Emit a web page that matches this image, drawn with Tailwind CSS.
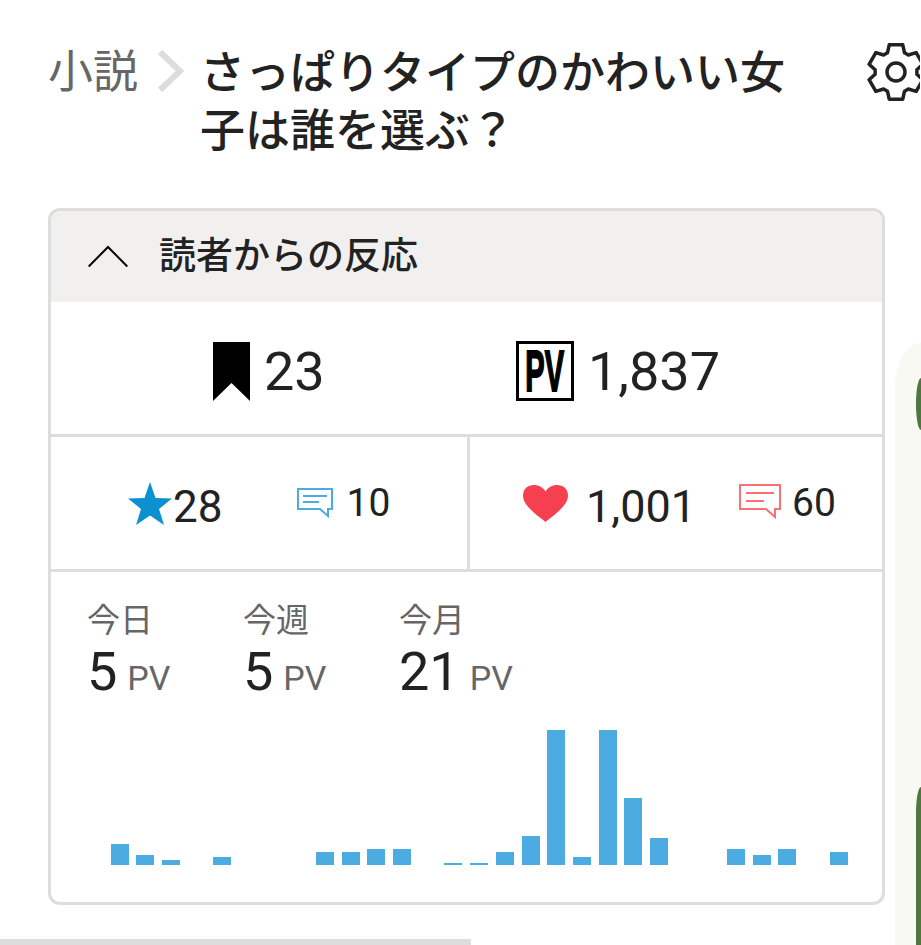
<!DOCTYPE html>
<html lang="ja">
<head>
    <meta charset="UTF-8">
    <title>読者からの反応</title>
    <script src="https://cdn.jsdelivr.net/npm/@tailwindcss/browser@4"></script>
</head>
<body class="bg-white h-[945px] w-[921px] overflow-hidden relative text-[#222222] font-['Roboto','Noto_Sans_CJK_JP',sans-serif]">

    <!-- side panel peeking in from the right -->
    <div class="absolute left-[895px] top-[343px] w-[26px] h-[602px] bg-[#f8f9f3] rounded-tl-[26px_44px]"></div>
    <div class="absolute left-[916px] top-[378px] w-[5px] h-[52px] bg-[#4f7541] rounded-l-[5px_26px]"></div>
    <div class="absolute left-[916px] top-[787px] w-[5px] h-[158px] bg-[#4f7541] rounded-tl-[5px_26px]"></div>

    <div class="pl-[48px] pt-[44px] w-[885px]">
        <!-- breadcrumb -->
        <div class="flex items-start h-[164px]">
            <span class="text-[45px] leading-[56px] mt-[1px] text-[#666666] shrink-0">小説</span>
            <svg class="shrink-0 ml-[19px] mt-[5px]" width="28" height="44" viewBox="0 0 28 44" fill="none"><path d="M3 3 L23 22 L3 41" stroke="#dddddd" stroke-width="6"/></svg>
            <h1 class="ml-[15px] mt-[1px] text-[45px] leading-[58px] font-medium w-[590px] shrink-0">さっぱりタイプのかわいい女子は誰を選ぶ？</h1>
            <svg class="shrink-0 ml-[76px] -mt-[2px]" width="54" height="60" viewBox="-30 -30 54 60" fill="none" stroke="#222222" stroke-width="3.5" stroke-linejoin="round">
                <path d="M-8.54 -19.18 L-6.77 -27.17 H6.77 L8.54 -19.18 L12.34 -16.99 L20.14 -19.45 L26.92 -7.72 L20.88 -2.2 V2.2 L26.92 7.72 L20.14 19.45 L12.34 16.99 L8.54 19.18 L6.77 27.17 H-6.77 L-8.54 19.18 L-12.34 16.99 L-20.14 19.45 L-26.92 7.72 L-20.88 2.2 V-2.2 L-26.92 -7.72 L-20.14 -19.45 L-12.34 -16.99 Z"/>
                <circle cx="0" cy="0" r="9"/>
            </svg>
        </div>

        <!-- card -->
        <div class="border-[3px] border-[#dddddd] rounded-[12px] overflow-hidden">
            <div class="flex items-center h-[91px] bg-[#f1f0ee] pl-[37px]">
                <svg width="40" height="23" viewBox="0 0 40 23" fill="none"><path d="M0.7 21.5 L20 2 L39.3 21.5" stroke="#000000" stroke-width="2"/></svg>
                <span class="ml-[31px] text-[37px] font-medium">読者からの反応</span>
            </div>

            <div class="flex h-[135px] pt-[6px] border-b-[3px] border-[#dddddd]">
                <div class="w-[419px] shrink-0 flex items-center pl-[162px]">
                    <svg width="37" height="59" viewBox="0 0 37 59"><path d="M0 0 H37 V59 L18.5 41 L0 59 Z" fill="#000000"/></svg>
                    <span class="ml-[14px] text-[54px]">23</span>
                </div>
                <div class="flex-1 flex items-center pl-[46px]">
                    <div class="w-[58px] h-[60px] shrink-0 border-[3px] border-black flex items-center justify-center">
                        <span class="scale-x-[.5] text-[58px] leading-none font-bold text-black whitespace-nowrap font-['Liberation_Sans',sans-serif] [-webkit-text-stroke:2px_black]">PV</span>
                    </div>
                    <span class="ml-[14px] text-[54px]">1,837</span>
                </div>
            </div>

            <div class="flex h-[135px] border-b-[3px] border-[#dddddd]">
                <div class="w-[419px] shrink-0 border-r-[3px] border-[#dddddd] flex items-center pl-[77px]">
                    <svg width="44" height="43" viewBox="0 0 44 43"><path d="M22 0 L27.5 16 L44 16.5 L31 27 L36 43 L22 33.5 L8 43 L13 27 L0 16.5 L16.5 16 Z" fill="#0c91d0"/></svg>
                    <span class="ml-[1px] mt-[8px] text-[44px]">28</span>
                    <svg class="ml-[75px]" width="36" height="30" viewBox="0 0 36 30" fill="none"><path d="M1 1 H35 V21 H31 V28 L23 21 H1 Z" stroke="#4cabe1" stroke-width="2"/><path d="M6 8 H30 M6 14 H22" stroke="#4cabe1" stroke-width="2"/></svg>
                    <span class="ml-[13px] text-[39px] mt-[1px]">10</span>
                </div>
                <div class="flex-1 flex items-center pl-[53px]">
                    <svg width="45" height="37" viewBox="0 0 45 37"><path d="M22.5 37 C14 30 0 21 0 10.5 C0 4 5 0 11 0 C16 0 20 2.5 22.5 6.5 C25 2.5 29 0 34 0 C40 0 45 4 45 10.5 C45 21 31 30 22.5 37 Z" fill="#f6404f"/></svg>
                    <span class="ml-[18px] mt-[8px] text-[45px]">1,001</span>
                    <svg class="ml-[43px] -mt-[2px]" width="42" height="36" viewBox="0 0 42 36" fill="none"><path d="M1 1 H41 V25 H36 V33 L27 25 H1 Z" stroke="#fb7074" stroke-width="2"/><path d="M7 9 H35 M7 17 H25" stroke="#fb7074" stroke-width="2"/></svg>
                    <span class="ml-[11px] text-[39px] mt-[1px]">60</span>
                </div>
            </div>

            <div class="h-[330px] pl-[36px] pt-[30px]">
                <div class="flex">
                    <div class="w-[156px]">
                        <div class="text-[33px] leading-[38px] text-[#666666]">今日</div>
                        <div class="flex items-baseline h-[62px] pt-[2px]"><span class="text-[54px] leading-[60px]">5</span><span class="ml-[10px] text-[34px] text-[#666666]">PV</span></div>
                    </div>
                    <div class="w-[156px]">
                        <div class="text-[33px] leading-[38px] text-[#666666]">今週</div>
                        <div class="flex items-baseline h-[62px] pt-[2px]"><span class="text-[54px] leading-[60px]">5</span><span class="ml-[10px] text-[34px] text-[#666666]">PV</span></div>
                    </div>
                    <div>
                        <div class="text-[33px] leading-[38px] text-[#666666]">今月</div>
                        <div class="flex items-baseline h-[62px] pt-[2px]"><span class="text-[54px] leading-[60px]">21</span><span class="ml-[10px] text-[34px] text-[#666666]">PV</span></div>
                    </div>
                </div>
                <div id="chart" class="relative h-[135px] mt-[28px] -ml-[36px]"></div>
            </div>
        </div>
    </div>

    <!-- scrollbar -->
    <div class="absolute left-0 top-[939px] w-[471px] h-[6px] bg-[#dddddd]"></div>

    <script>
        // [left edge in page px, bar height]
        const bars = [
            [111, 21], [136, 10], [162, 5], [213, 8],
            [316, 13], [342, 13], [367, 16], [393, 16],
            [444, 2], [470, 2], [496, 13], [522, 29],
            [547, 135], [573, 8], [599, 135], [624, 67], [650, 27],
            [727, 16], [753, 10], [778, 16], [830, 13]
        ];
        const chart = document.getElementById('chart');
        bars.forEach(([left, height]) => {
            const bar = document.createElement('div');
            bar.className = 'absolute bottom-0 w-[18px] bg-[#4cabe1]';
            bar.style.left = (left - 51) + 'px';
            bar.style.height = height + 'px';
            chart.appendChild(bar);
        });
    </script>
</body>
</html>
